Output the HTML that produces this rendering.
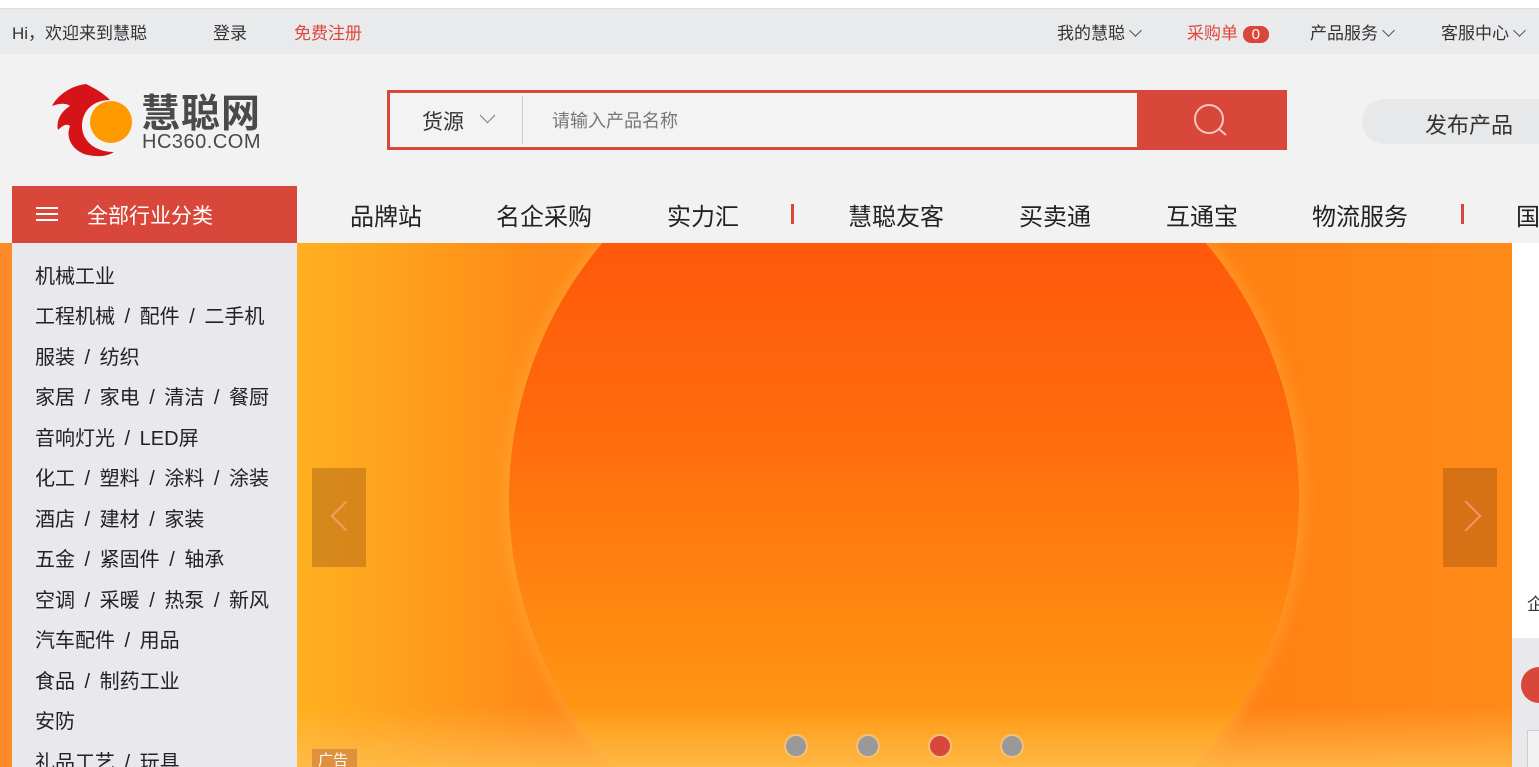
<!DOCTYPE html>
<html><head><meta charset="utf-8"><style>
*{margin:0;padding:0;box-sizing:border-box}
html,body{overflow:hidden}
body{width:1539px;height:767px;background:#f2f2f2;font-family:"Liberation Sans","Noto Sans CJK SC",sans-serif;position:relative}
.a{position:absolute;white-space:nowrap}
.top{position:absolute;left:0;top:8px;width:1539px;height:46px;background:#e9eaec;border-top:1px solid #ddd;font-size:17px;color:#333}
.top span{position:absolute;top:10px}
.chev{display:inline-block;width:9px;height:9px;border-right:1px solid #555;border-bottom:1px solid #555;transform:rotate(45deg);margin-left:6px;position:relative;top:-4px}
.nav span{position:absolute;top:197px;font-size:24px;color:#222}
.cat{position:absolute;left:12px;top:243px;width:285px;height:524px;background:#e8e8ed}
.cat div{position:absolute;left:23px;font-size:20px;color:#222;word-spacing:4px}
</style></head><body>
<div class="a" style="left:0;top:0;width:1539px;height:8px;background:#fff"></div>
<div class="top">
<span style="left:12px">Hi，欢迎来到慧聪</span>
<span style="left:213px">登录</span>
<span style="left:294px;color:#e2463c">免费注册</span>
<span style="left:1057px">我的慧聪<i class="chev"></i></span>
<span style="left:1187px;color:#e2463c">采购单 <b style="display:inline-block;background:#d9463a;color:#fff;border-radius:8px;font-size:15px;width:26px;height:17px;line-height:17px;text-align:center;font-weight:normal">0</b></span>
<span style="left:1310px">产品服务<i class="chev"></i></span>
<span style="left:1441px">客服中心<i class="chev"></i></span>
</div>
<svg class="a" style="left:48px;top:82px" width="86" height="76" viewBox="0 0 86 76">
<path d="M38 2 C20 4 8 16 4 24 C14 20 20 22 22 24 C12 30 8 40 10 48 C16 42 20 42 22 44 C18 54 22 66 36 72 C50 76 60 74 66 70 C46 70 34 58 34 44 C34 28 46 18 62 18 C54 10 46 6 38 2Z" fill="#d7131a"/>
<circle cx="63" cy="40" r="21" fill="#ff9900"/>
</svg>
<div class="a" style="left:141px;top:83px;font-size:39px;font-weight:bold;color:#4a4a4a;letter-spacing:1px">慧聪网</div>
<div class="a" style="left:142px;top:131px;font-size:20px;color:#4a4a4a;letter-spacing:0.5px">HC360.COM</div>
<div class="a" style="left:387px;top:90px;width:900px;height:60px;border:3px solid #d9463a;background:#f3f3f3"></div>
<div class="a" style="left:422px;top:106px;font-size:21px;color:#333">货源</div>
<i class="a" style="left:482px;top:110px;width:11px;height:11px;border-right:1.5px solid #777;border-bottom:1.5px solid #777;transform:rotate(45deg)"></i>
<div class="a" style="left:522px;top:96px;width:1px;height:48px;background:#ccc"></div>
<div class="a" style="left:552px;top:107px;font-size:18px;color:#777">请输入产品名称</div>
<div class="a" style="left:1137px;top:90px;width:150px;height:60px;background:#d9463a"></div>
<svg class="a" style="left:1192px;top:102px" width="42" height="36"><circle cx="17" cy="17" r="14" stroke="#f3c9c0" stroke-width="2" fill="none"/><line x1="27" y1="27" x2="34" y2="33" stroke="#f3c9c0" stroke-width="2"/></svg>
<div class="a" style="left:1362px;top:99px;width:200px;height:45px;border-radius:23px;background:#e7e8ea"></div>
<div class="a" style="left:1425px;top:108px;font-size:22px;color:#333">发布产品</div>
<div class="a" style="left:12px;top:186px;width:285px;height:57px;background:#d9463a"></div>
<div class="a" style="left:36px;top:207px;width:22px;height:14px;border-top:2px solid #fff;border-bottom:2px solid #fff"></div>
<div class="a" style="left:36px;top:213px;width:22px;height:2px;background:#fff"></div>
<div class="a" style="left:87px;top:200px;font-size:21px;color:#fff">全部行业分类</div>
<div class="nav">
<span style="left:350px">品牌站</span><span style="left:496px">名企采购</span><span style="left:667px">实力汇</span>
<span style="left:848px">慧聪友客</span><span style="left:1019px">买卖通</span><span style="left:1166px">互通宝</span><span style="left:1312px">物流服务</span><span style="left:1516px">国</span>
</div>
<div class="a" style="left:791px;top:204px;width:3px;height:20px;background:#d9463a"></div>
<div class="a" style="left:1461px;top:204px;width:3px;height:20px;background:#d9463a"></div>
<div class="a" style="left:0;top:243px;width:12px;height:524px;background:#ff8a2a"></div>
<div class="a" style="left:297px;top:243px;width:1215px;height:524px;overflow:hidden;background:linear-gradient(90deg,#ffb020 0%,#ff8a18 20%,#ff7a10 60%,#ff8a18 100%)">
<div class="a" style="left:212px;top:-140px;width:790px;height:790px;border-radius:50%;background:linear-gradient(180deg,#ff4a0a 0%,#ff6a0c 40%,#ff9a14 80%,#ffb020 100%);box-shadow:0 0 20px rgba(255,200,80,.5)"></div>
<div class="a" style="left:0;bottom:0;width:1215px;height:60px;background:linear-gradient(180deg,rgba(255,180,60,0),rgba(255,190,80,.8))"></div>
<div class="a" style="left:15px;top:225px;width:54px;height:99px;background:rgba(120,60,20,.3)"></div>
<div class="a" style="left:1146px;top:225px;width:54px;height:99px;background:rgba(120,60,20,.3)"></div>
<i class="a" style="left:1158px;top:262px;width:22px;height:22px;border-right:2px solid rgba(255,160,120,.8);border-top:2px solid rgba(255,160,120,.8);transform:rotate(45deg)"></i>
<i class="a" style="left:38px;top:262px;width:22px;height:22px;border-left:2px solid rgba(255,160,120,.8);border-bottom:2px solid rgba(255,160,120,.8);transform:rotate(45deg)"></i>
<div class="a" style="left:487px;top:491px;width:24px;height:24px;border-radius:50%;background:#999;border:2px solid #f5c07a"></div>
<div class="a" style="left:559px;top:491px;width:24px;height:24px;border-radius:50%;background:#999;border:2px solid #f5c07a"></div>
<div class="a" style="left:631px;top:491px;width:24px;height:24px;border-radius:50%;background:#d9463a;border:2px solid #f5c07a"></div>
<div class="a" style="left:703px;top:491px;width:24px;height:24px;border-radius:50%;background:#999;border:2px solid #f5c07a"></div>
<div class="a" style="left:15px;top:506px;width:45px;height:18px;background:rgba(200,120,60,.6);color:#fff;font-size:15px;padding-left:6px;overflow:hidden">广告</div>
</div>
<div class="a" style="left:1512px;top:243px;width:27px;height:395px;background:#fff"></div>
<div class="a" style="left:1527px;top:590px;font-size:17px;color:#333">企</div>
<div class="a" style="left:1512px;top:638px;width:27px;height:129px;background:#e8e8ed"></div>
<div class="a" style="left:1521px;top:667px;width:36px;height:36px;border-radius:50%;background:#d9463a"></div>
<div class="a" style="left:1527px;top:730px;width:20px;height:37px;border:1px solid #ccc;border-bottom:none;background:#f2f2f2"></div>
<div class="cat">
<div style="top:17px">机械工业</div>
<div style="top:57px">工程机械 / 配件 / 二手机</div>
<div style="top:98px">服装 / 纺织</div>
<div style="top:138px">家居 / 家电 / 清洁 / 餐厨</div>
<div style="top:179px">音响灯光 / LED屏</div>
<div style="top:219px">化工 / 塑料 / 涂料 / 涂装</div>
<div style="top:260px">酒店 / 建材 / 家装</div>
<div style="top:300px">五金 / 紧固件 / 轴承</div>
<div style="top:341px">空调 / 采暖 / 热泵 / 新风</div>
<div style="top:381px">汽车配件 / 用品</div>
<div style="top:422px">食品 / 制药工业</div>
<div style="top:462px">安防</div>
<div style="top:503px;height:21px;overflow:hidden">礼品工艺 / 玩具</div>
</div>
</body></html>
